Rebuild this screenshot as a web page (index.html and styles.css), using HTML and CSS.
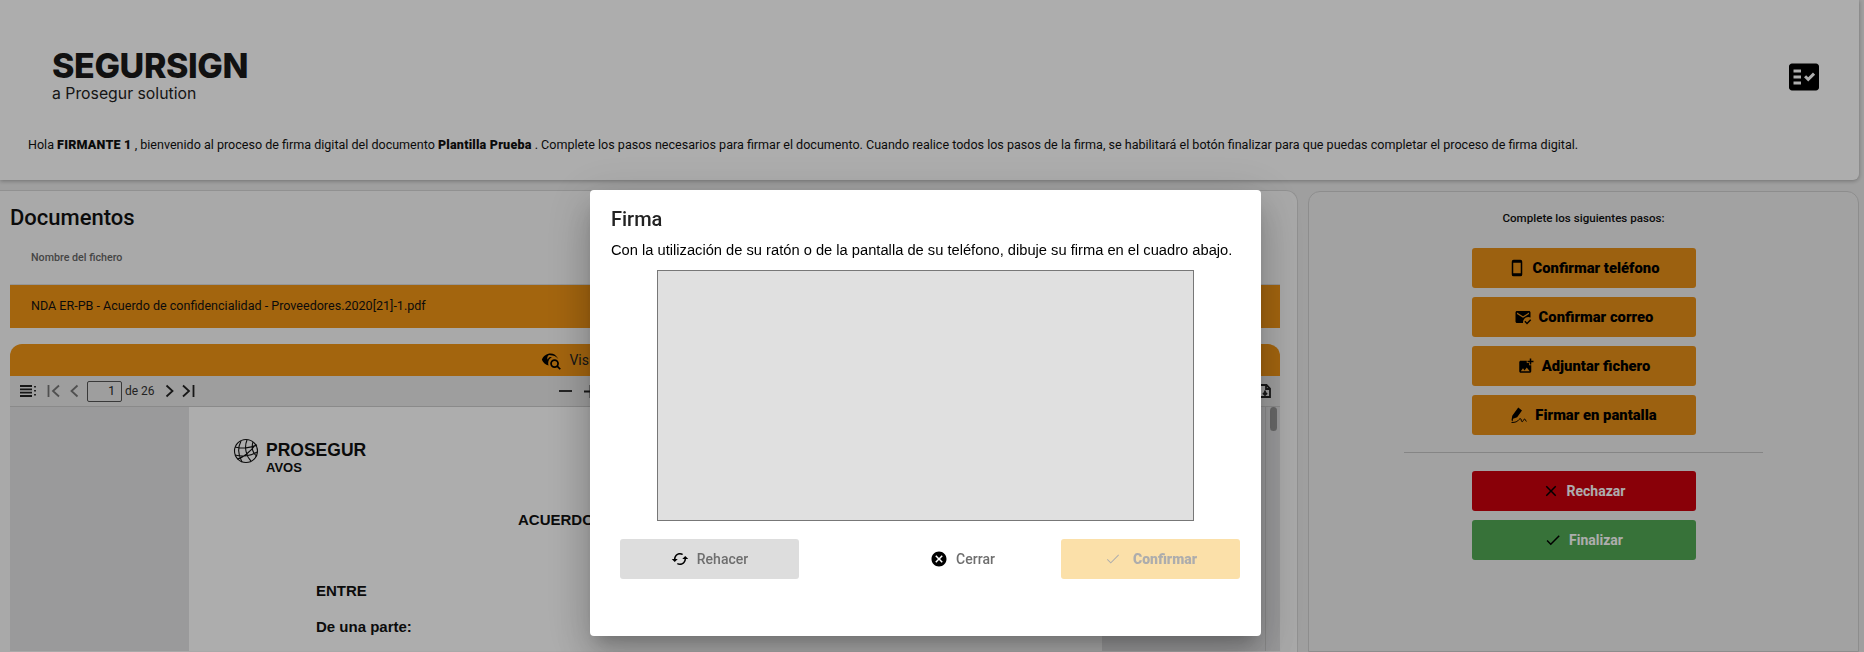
FILE: index.html
```html
<!DOCTYPE html>
<html lang="en">
<head>
  <meta charset="UTF-8">
  <title>SeguRSign</title>
  <link rel="stylesheet" href="styles.css">
</head>
<body>
  <header class="site-header">
    <div class="brand-row">
      <div class="brand">
        <div class="brand-name">SEGURSIGN</div>
        <div class="brand-sub">a Prosegur solution</div>
      </div>
      <svg class="steps-toggle" viewBox="0 0 24 24"><path d="M20 3H4c-1.1 0-2 .9-2 2v14c0 1.1.9 2 2 2h16c1.1 0 2-.9 2-2V5c0-1.1-.9-2-2-2zM10 17H5v-2h5v2zm0-4H5v-2h5v2zm0-4H5V7h5v2zm4.82 6L12 12.16l1.41-1.41 1.41 1.42L17.99 9l1.42 1.42L14.82 15z"/></svg>
    </div>
    <p class="intro">Hola <b>FIRMANTE 1</b> , bienvenido al proceso de firma digital del documento <b>Plantilla Prueba</b> . Complete los pasos necesarios para firmar el documento. Cuando realice todos los pasos de la firma, se habilitará el botón finalizar para que puedas completar el proceso de firma digital.</p>
  </header>

  <main class="content">
    <section class="docs-panel">
      <h2 class="docs-title">Documentos</h2>
      <div class="docs-head">Nombre del fichero</div>
      <div class="docs-row">NDA ER-PB - Acuerdo de confidencialidad - Proveedores.2020[21]-1.pdf</div>

      <div class="viewer">
        <div class="viewer-title">
          <svg class="eye-icon" viewBox="0 0 24 24"><path d="M11 4C6.5 4 2.7 6.8 1 11c1.4 3.4 4.200 5.900 7.700 6.700-.3-.9-.5-1.800-.5-2.700 0-2.900 1.700-5.500 4.300-6.600A3 3 0 0 0 8 11a3 3 0 0 1 3-5c3 0 6 1 9 4.500C17.500 6 14.500 4 11 4z"/><circle cx="15.500" cy="15.500" r="4" fill="none" stroke="#000" stroke-width="2"/><path d="M18.500 18.500l3.500 3.500" stroke="#000" stroke-width="2"/></svg>
          <span>Visualización del documento</span>
        </div>
        <div class="viewer-bar">
          <svg class="bar-icon menu-icon" viewBox="0 0 18 14"><path d="M1 2h12M1 5.300h12M1 8.600h12M1 12h12M16 2v1.500M16 6v1.500M16 10v1.500"/></svg>
          <svg class="bar-icon faint first-icon" viewBox="0 0 14 14"><path d="M1.500 1v12M12 1.500L6 7l6 5.500"/></svg>
          <svg class="bar-icon faint prev-icon" viewBox="0 0 9 14"><path d="M7.500 1.500L1.500 7l6 5.500"/></svg>
          <input class="page-input" type="text" value="1">
          <span class="page-count">de 26</span>
          <svg class="bar-icon next-icon" viewBox="0 0 9 14"><path d="M1.500 1.500l6 5.500-6 5.500"/></svg>
          <svg class="bar-icon last-icon" viewBox="0 0 14 14"><path d="M2 1.500L8 7l-6 5.500M12.500 1v12"/></svg>
          <svg class="bar-icon zoom-out" viewBox="0 0 13 4"><path d="M0 2h13"/></svg>
          <svg class="bar-icon zoom-in" viewBox="0 0 13 13"><path d="M0 6.500h13M6.500 0v13"/></svg>
          <svg class="bar-icon save-icon" viewBox="0 0 12 14"><path d="M1 1h6.500L11 4.500V13H1zM7 1v4h4M6 6.500v4M4 9l2 2 2-2"/></svg>
        </div>
        <div class="viewer-body">
          <div class="doc-gutter"></div>
          <article class="doc-page">
            <div class="doc-logo">
              <svg class="globe" viewBox="0 0 26 26"><circle cx="13" cy="13" r="11.500"/><path d="M2 9c6 2 16 1 22-2M2 17c7 2 16 1 22-3M4 21c6-1 14-8 19-15M8 3c-3 6-3 14 1 21M14 2c-3 7-1 16 4 21M20 4c-2 6 0 12 4 14"/></svg>
              <div class="doc-logo-text">
                <div class="doc-logo-name">PROSEGUR</div>
                <div class="doc-logo-sub">AVOS</div>
              </div>
            </div>
            <h3 class="doc-heading">ACUERDO DE CONFIDENCIALIDAD</h3>
            <p class="doc-entre">ENTRE</p>
            <p class="doc-line">De una parte:</p>
          </article>
          <div class="doc-rest"></div>
          <div class="doc-scroll"><div class="doc-thumb"></div></div>
        </div>
      </div>
    </section>

    <aside class="steps-panel">
      <h4 class="steps-title">Complete los siguientes pasos:</h4>
      <button class="step-btn btn-orange">
        <svg viewBox="0 0 24 24"><path d="M16.500 1h-9A2.500 2.500 0 0 0 5 3.500v17A2.500 2.500 0 0 0 7.500 23h9a2.500 2.500 0 0 0 2.500-2.500v-17A2.500 2.500 0 0 0 16.500 1zM17 19H7V5h10v14z"/></svg>
        Confirmar teléfono
      </button>
      <button class="step-btn btn-orange">
        <svg viewBox="0 0 24 24"><path d="M12 19c0-3.870 3.130-7 7-7 1.080 0 2.090.25 3 .68V6c0-1.100-.9-2-2-2H4c-1.100 0-2 .9-2 2v12c0 1.100.9 2 2 2h8.080c-.05-.33-.08-.66-.08-1zM4 6l8 5 8-5v2l-8 5-8-5V6zm13.340 16l-3.540-3.540 1.410-1.410 2.120 2.120 4.240-4.240L23 16.340 17.340 22z"/></svg>
        Confirmar correo
      </button>
      <button class="step-btn btn-orange">
        <svg viewBox="0 0 24 24"><path d="M19 7v2.990s-1.990.01-2 0V7h-3s.01-1.990 0-2h3V2h2v3h3v2h-3zm-3 4V8h-3V5H5c-1.100 0-2 .9-2 2v12c0 1.100.9 2 2 2h12c1.100 0 2-.9 2-2v-8h-3zM5 19l3-4 2 3 3-4 4 5H5z"/></svg>
        Adjuntar fichero
      </button>
      <button class="step-btn btn-orange">
        <svg viewBox="0 0 24 24"><path d="M11 2l5 4-6.500 9L4 17l-.5 3.500L2 19l1-6z"/><path d="M2 22c5 0 8-1 10-4 1-1.500 3-1.500 3 .5s1 3 2 2 1-3 2.500-3 1 3 2.500 3" fill="none" stroke="#000" stroke-width="1.300"/></svg>
        Firmar en pantalla
      </button>
      <hr class="steps-rule">
      <button class="step-btn btn-red">
        <svg viewBox="0 0 24 24"><path d="M19 6.410L17.590 5 12 10.590 6.410 5 5 6.410 10.590 12 5 17.590 6.410 19 12 13.410 17.590 19 19 17.590 13.410 12z"/></svg>
        Rechazar
      </button>
      <button class="step-btn btn-green">
        <svg viewBox="0 0 24 24"><path d="M9 16.170L4.830 12l-1.420 1.410L9 19 21 7l-1.410-1.410z"/></svg>
        Finalizar
      </button>
    </aside>
  </main>

  <div class="overlay">
    <div class="modal">
      <h2 class="modal-title">Firma</h2>
      <p class="modal-text">Con la utilización de su ratón o de la pantalla de su teléfono, dibuje su firma en el cuadro abajo.</p>
      <div class="sign-box"></div>
      <div class="modal-actions">
        <button class="modal-btn btn-redo">
          <svg viewBox="0 0 24 24"><path d="M19 8l-4 4h3c0 3.310-2.690 6-6 6-1.010 0-1.970-.25-2.800-.7l-1.460 1.460C8.970 19.540 10.430 20 12 20c4.420 0 8-3.580 8-8h3l-4-4zM6 12c0-3.310 2.690-6 6-6 1.010 0 1.970.25 2.800.7l1.460-1.460C15.030 4.460 13.570 4 12 4c-4.420 0-8 3.580-8 8H1l4 4 4-4H6z"/></svg>
          Rehacer
        </button>
        <button class="modal-btn btn-close">
          <svg viewBox="0 0 24 24"><path d="M12 2C6.470 2 2 6.470 2 12s4.470 10 10 10 10-4.470 10-10S17.530 2 12 2zm5 13.590L15.590 17 12 13.410 8.410 17 7 15.590 10.590 12 7 8.410 8.410 7 12 10.590 15.590 7 17 8.410 13.410 12 17 15.590z"/></svg>
          Cerrar
        </button>
        <button class="modal-btn btn-confirm">
          <svg viewBox="0 0 24 24"><path d="M9 16.170L4.830 12l-.9.9L9 18 20 7l-.9-.9z"/></svg>
          Confirmar
        </button>
      </div>
    </div>
  </div>
</body>
</html>
```

FILE: styles.css
```css
* {
  box-sizing: border-box;
}
body {
  margin: 0;
  height: 652px;
  overflow: hidden;
  font-family: 'Roboto', sans-serif;
  background: #ebebeb;
  color: #111;
}
.site-header {
  height: 180px;
  margin-right: 5px;
  padding: 48px 0 0 28px;
  background: #fff;
  border-bottom-right-radius: 6px;
  box-shadow: 0 1px 4px rgba(0,0,0,0.3);
}
.brand-row {
  display: flex;
  justify-content: space-between;
  padding-left: 24px;
}
.brand-name {
  font-family: 'Inter', sans-serif;
  font-weight: 800;
  font-size: 34px;
  line-height: 36px;
  letter-spacing: -0.4px;
  color: #1a1a1a;
}
.brand-sub {
  font-family: 'Inter', sans-serif;
  font-size: 15.800px;
  line-height: 19px;
  color: #222;
}
.steps-toggle {
  width: 36px;
  height: 36px;
  margin: 11px 37px 0 0;
}
.intro {
  margin: 33px 0 0;
  font-size: 12.550px;
  line-height: 18px;
}
.intro b {
  font-weight: 900;
  letter-spacing: 0.2px;
}
.content {
  display: flex;
  gap: 10px;
  padding-top: 10px;
}
.docs-panel {
  flex: 0 0 1298px;
  height: 462px;
  padding: 0 17px 0 10px;
  background: #fafafa;
  border-top: 1px solid #d6d6d6;
  border-right: 1px solid #d6d6d6;
  border-top-right-radius: 12px;
}
.docs-title {
  margin: 13px 0 0;
  font-size: 22px;
  line-height: 28px;
  font-weight: 500;
}
.docs-head {
  height: 52px;
  padding: 19px 0 0 21px;
  font-size: 10.700px;
  font-weight: 500;
  color: #666;
}
.docs-row {
  height: 44px;
  padding: 0 21px;
  background: #f19516;
  border-top: 1px solid #ddd;
  font-size: 12.550px;
  line-height: 42px;
}
.viewer {
  margin-top: 16px;
}
.viewer-title {
  display: flex;
  align-items: center;
  justify-content: center;
  gap: 7px;
  height: 32px;
  background: #f19516;
  border-radius: 12px 12px 0 0;
  font-size: 14px;
  color: #222;
}
.eye-icon {
  width: 21px;
  height: 21px;
}
.viewer-bar {
  display: flex;
  align-items: center;
  height: 31px;
  background: #e9e9e9;
  border-bottom: 1px solid #ccc;
  font-size: 12px;
  color: #333;
}
.bar-icon {
  fill: none;
  stroke: #222;
  stroke-width: 1.800;
}
.bar-icon.faint {
  stroke: #777;
}
.menu-icon {
  width: 18px;
  height: 14px;
  margin-left: 9px;
}
.first-icon {
  width: 14px;
  height: 14px;
  margin-left: 10px;
}
.prev-icon {
  width: 9px;
  height: 14px;
  margin-left: 9px;
}
.page-input {
  width: 35px;
  height: 21px;
  margin-left: 8px;
  padding: 0 6px;
  background: transparent;
  border: 1px solid #555;
  border-radius: 2px;
  font: 12px 'Roboto', sans-serif;
  color: #222;
  text-align: right;
}
.page-count {
  margin-left: 3px;
}
.next-icon {
  width: 9px;
  height: 14px;
  margin-left: 10px;
}
.last-icon {
  width: 14px;
  height: 14px;
  margin-left: 7px;
}
.zoom-out {
  width: 13px;
  height: 4px;
  margin-left: 364px;
}
.zoom-in {
  width: 13px;
  height: 13px;
  margin-left: 12px;
}
.save-icon {
  width: 12px;
  height: 14px;
  margin-left: auto;
  margin-right: 9px;
}
.viewer-body {
  display: flex;
  height: 244px;
}
.doc-gutter {
  flex: 0 0 179px;
  background: #e3e3e5;
}
.doc-page {
  flex: 0 0 913px;
  padding: 31px 0 0 44px;
  background: #fff;
  font-family: 'Liberation Sans', sans-serif;
  color: #111;
}
.doc-logo {
  display: flex;
  gap: 7px;
}
.globe {
  width: 26px;
  height: 26px;
  fill: none;
  stroke: #111;
  stroke-width: 1.100;
}
.doc-logo-name {
  font-size: 17.500px;
  line-height: 24px;
  font-weight: 700;
}
.doc-logo-sub {
  font-size: 13px;
  line-height: 12px;
  font-weight: 700;
}
.doc-heading {
  margin: 37px 0 0 -44px;
  font-size: 15px;
  line-height: 18px;
  text-align: center;
}
.doc-entre {
  margin: 53px 0 0 83px;
  font-size: 15px;
  line-height: 18px;
  font-weight: 700;
}
.doc-line {
  margin: 18px 0 0 83px;
  font-size: 15px;
  line-height: 18px;
  font-weight: 700;
}
.doc-rest {
  flex: 1;
  background: #e3e3e5;
}
.doc-scroll {
  flex: 0 0 15px;
  padding: 0 3px 0 4px;
  background: #e3e3e5;
  border-left: 1px solid #ccc;
}
.doc-thumb {
  height: 24px;
  background: #999;
  border-radius: 4px;
}
.steps-panel {
  display: flex;
  flex-direction: column;
  align-items: center;
  flex: 0 0 551px;
  height: 461px;
  margin-top: 1px;
  background: #efefef;
  border: 1px solid #d0d0d0;
  border-radius: 12px 12px 0 0;
}
.steps-title {
  margin: 19px 0 23px;
  font-size: 11.600px;
  line-height: 14px;
  font-weight: 500;
}
.step-btn {
  display: flex;
  align-items: center;
  justify-content: center;
  gap: 7px;
  width: 224px;
  height: 40px;
  margin-bottom: 9px;
  border: none;
  border-radius: 3px;
  font: 700 14px 'Roboto', sans-serif;
}
.step-btn svg {
  width: 18px;
  height: 18px;
}
.btn-orange {
  background: #e68f19;
  color: #000;
  font-size: 14.800px;
  font-weight: 900;
}
.btn-red {
  background: #cb000d;
  color: #fff;
}
.btn-green {
  background: #52a955;
  color: #fff;
}
.steps-rule {
  width: 359px;
  margin: 8px 0 18px;
  border: none;
  border-top: 1px solid #c4c4c4;
}
.overlay {
  position: fixed;
  inset: 0;
  background: rgba(0,0,0,0.32);
}
.modal {
  position: absolute;
  left: 590px;
  top: 190px;
  width: 671px;
  height: 446px;
  padding: 0 21px 0 21px;
  background: #fff;
  border-radius: 4px;
  box-shadow: 0 11px 15px -7px rgba(0,0,0,.2), 0 24px 38px 3px rgba(0,0,0,.14), 0 9px 46px 8px rgba(0,0,0,.12);
}
.modal-title {
  margin: 15px 0 0;
  font-size: 20px;
  line-height: 28px;
  font-weight: 500;
  color: #222;
}
.modal-text {
  margin: 8px 0 0;
  font-family: 'Liberation Sans', sans-serif;
  font-size: 14.700px;
  line-height: 18px;
  color: #000;
  white-space: nowrap;
}
.sign-box {
  width: 537px;
  height: 251px;
  margin: 11px 0 0 46px;
  background: #e0e0e0;
  border: 1px solid #777;
}
.modal-actions {
  display: flex;
  gap: 9px;
  margin: 18px 0 0 9px;
}
.modal-btn {
  display: flex;
  align-items: center;
  justify-content: center;
  gap: 8px;
  width: 179px;
  height: 40px;
  background: transparent;
  border: none;
  border-radius: 3px;
  font: 500 14px 'Roboto', sans-serif;
  color: #6e6e6e;
}
.modal-btn svg {
  width: 18px;
  height: 18px;
}
.btn-redo {
  background: #dddddd;
}
.btn-close {
  margin-left: auto;
}
.btn-confirm {
  gap: 11px;
  background: #fbe0a9;
  font-weight: 900;
  color: #adadad;
}
.btn-confirm svg {
  fill: #adadad;
}
```
